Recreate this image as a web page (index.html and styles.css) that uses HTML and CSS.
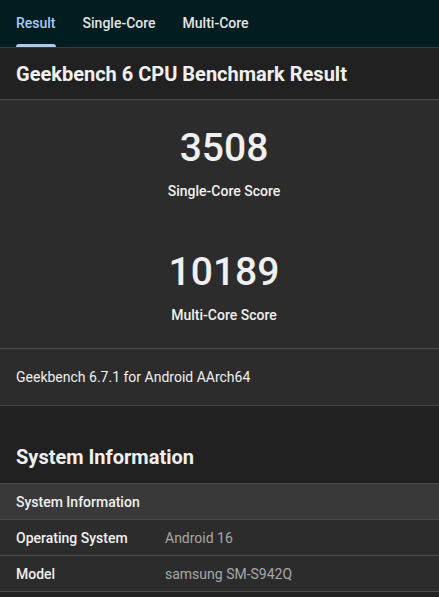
FILE: index.html
```html
<!DOCTYPE html>
<html lang="en">
<head>
  <meta charset="UTF-8">
  <title>Geekbench 6 CPU Benchmark Result</title>
  <meta name="viewport" content="width=device-width, initial-scale=1.0">
  <link rel="stylesheet" href="styles.css">
</head>
<body>
  <div class="tabs">
    <div class="tab active">Result</div>
    <div class="tab">Single-Core</div>
    <div class="tab">Multi-Core</div>
  </div>

  <div class="title-bar">
    <h1>Geekbench 6 CPU Benchmark Result</h1>
  </div>

  <div class="scores">
    <div class="score">
      <div class="score-value">3508</div>
      <div class="score-label">Single-Core Score</div>
    </div>
    <div class="score">
      <div class="score-value">10189</div>
      <div class="score-label">Multi-Core Score</div>
    </div>
  </div>

  <div class="version">Geekbench 6.7.1 for Android AArch64</div>

  <div class="section-title">
    <h2>System Information</h2>
  </div>

  <div class="info-table">
    <div class="info-head">System Information</div>
    <div class="info-row">
      <div class="info-name">Operating System</div>
      <div class="info-value">Android 16</div>
    </div>
    <div class="info-row">
      <div class="info-name">Model</div>
      <div class="info-value">samsung SM-S942Q</div>
    </div>
  </div>
</body>
</html>
```

FILE: styles.css
```css
body {
  font-family: Roboto, "Noto Sans", Arial, sans-serif;
  background: #212121;
  color: #f0f0f0;
  margin: 0;
}
.tabs {
  background: #021d20;
  height: 47px;
  display: flex;
  padding-left: 16px;
  gap: 27px;
  border-bottom: 1px solid #3a3a3a;
}
.tab {
  position: relative;
  font-size: 14px;
  font-weight: 500;
  line-height: 47px;
  color: #e4e4e4;
}
.tab.active {
  color: #a9cbf5;
}
.tab.active::after {
  content: "";
  position: absolute;
  left: 0;
  right: 0;
  bottom: 0;
  height: 3px;
  background: #a9cbf5;
  border-radius: 3px 3px 0 0;
}
.title-bar {
  height: 51px;
  padding: 0 16px;
  display: flex;
  align-items: center;
  border-bottom: 1px solid #4a4a4a;
}
.title-bar h1 {
  margin: 0;
  font-size: 20px;
  font-weight: 700;
}
.scores {
  background: #2c2c2c;
  padding: 24px 0 24px 9px;
  border-bottom: 1px solid #4a4a4a;
  text-align: center;
}
.score + .score {
  margin-top: 48px;
}
.score-value {
  font-size: 39px;
  font-weight: 500;
  line-height: 48px;
}
.score-label {
  margin-top: 10px;
  font-size: 14px;
  font-weight: 500;
  line-height: 18px;
}
.version {
  background: #2c2c2c;
  height: 56px;
  padding: 0 16px;
  display: flex;
  align-items: center;
  font-size: 14px;
  border-bottom: 1px solid #4a4a4a;
}
.section-title {
  height: 77px;
  padding: 0 16px;
  display: flex;
  align-items: flex-end;
  border-bottom: 1px solid #4a4a4a;
}
.section-title h2 {
  margin: 0 0 14px;
  font-size: 20px;
  font-weight: 700;
}
.info-head {
  background: #393939;
  height: 35px;
  padding: 0 16px;
  display: flex;
  align-items: center;
  font-size: 14px;
  font-weight: 500;
  border-bottom: 1px solid #4a4a4a;
}
.info-row {
  background: #2c2c2c;
  height: 35px;
  padding: 0 16px;
  display: flex;
  align-items: center;
  font-size: 14px;
  border-bottom: 1px solid #4a4a4a;
}
.info-name {
  width: 149px;
  font-weight: 500;
}
.info-value {
  color: #a8a8a8;
}
```
